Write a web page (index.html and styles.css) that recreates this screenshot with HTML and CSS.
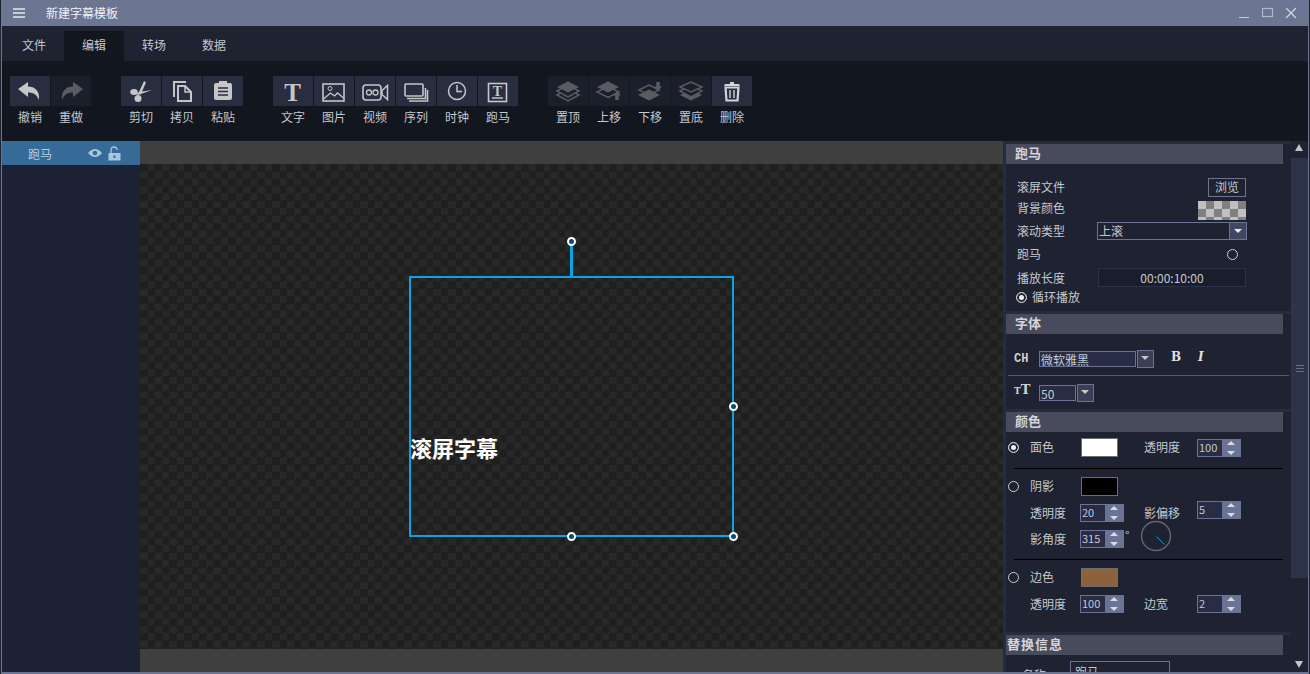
FILE: index.html
```html
<!DOCTYPE html>
<html lang="zh-CN">
<head>
    <meta charset="UTF-8">
    <title>新建字幕模板</title>
    <link rel="stylesheet" href="styles.css">
</head>
<body>
<div class="window">
    <div class="titlebar">
        <svg class="menu-icon" width="12" height="10" viewBox="0 0 12 10"><path d="M0 1h12M0 5h12M0 9h12" stroke="#c8ccd6" stroke-width="2"/></svg>
        <span class="title">新建字幕模板</span>
        <div class="win-controls">
            <svg width="12" height="12" viewBox="0 0 12 12"><path d="M0 10.500h10" stroke="#c8ccd6"/></svg>
            <svg width="12" height="12" viewBox="0 0 12 12"><rect x="0.500" y="1.500" width="10" height="8" fill="none" stroke="#b4b9c8" stroke-width="1.200"/></svg>
            <svg width="12" height="12" viewBox="0 0 12 12"><path d="M1 1l10 10M11 1L1 11" stroke="#d4d7df" stroke-width="1.200"/></svg>
        </div>
    </div>

    <div class="tabs">
        <div class="tab">文件</div>
        <div class="tab active">编辑</div>
        <div class="tab">转场</div>
        <div class="tab">数据</div>
    </div>

    <div class="toolbar">
        <div class="tool-group">
            <div class="tool">
                <div class="tool-btn"><svg width="40" height="30" viewBox="0 0 40 30"><path d="M8 13L18 6v4.500c7 0 12 4.500 11 13.500-2-5-5-7.500-11-7.500V21z" fill="#c6c6c6"/></svg></div>
                <span>撤销</span>
            </div>
            <div class="tool off">
                <div class="tool-btn"><svg width="40" height="30" viewBox="0 0 40 30"><path d="M32 13L22 6v4.500c-7 0-12 4.500-11 13.500 2-5 5-7.500 11-7.500V21z" fill="#5a5c63"/></svg></div>
                <span>重做</span>
            </div>
        </div>
        <div class="tool-group">
            <div class="tool">
                <div class="tool-btn"><svg width="40" height="30" viewBox="0 0 40 30"><path d="M23 5l-5 11 1.500 3L25 6.500zM31 14l-13 2-3 2 2 1z" fill="#c6c6c6"/><ellipse cx="13" cy="16" rx="3.800" ry="3" fill="#c6c6c6"/><ellipse cx="17" cy="22.500" rx="3.500" ry="3.500" fill="#c6c6c6"/></svg></div>
                <span>剪切</span>
            </div>
            <div class="tool">
                <div class="tool-btn"><svg width="40" height="30" viewBox="0 0 40 30"><path d="M24 6H12v15" fill="none" stroke="#c6c6c6" stroke-width="2"/><path d="M16 10h7l6 6v9H16z" fill="none" stroke="#c6c6c6" stroke-width="2"/><path d="M23 10v6h6" fill="none" stroke="#c6c6c6" stroke-width="1.500"/></svg></div>
                <span>拷贝</span>
            </div>
            <div class="tool">
                <div class="tool-btn"><svg width="40" height="30" viewBox="0 0 40 30"><path d="M11 9q0-2 2-2h3V5h8v2h3q2 0 2 2v13q0 2-2 2H13q-2 0-2-2z" fill="#c6c6c6"/><path d="M15 12h10M15 15.500h10M15 19h10" stroke="#282d40" stroke-width="1.500"/></svg></div>
                <span>粘贴</span>
            </div>
        </div>
        <div class="tool-group">
            <div class="tool">
                <div class="tool-btn"><svg width="40" height="30" viewBox="0 0 40 30"><text x="19.500" y="25" text-anchor="middle" class="icon-t">T</text></svg></div>
                <span>文字</span>
            </div>
            <div class="tool">
                <div class="tool-btn"><svg width="40" height="30" viewBox="0 0 40 30"><rect x="9" y="8" width="21" height="17" fill="none" stroke="#c6c6c6" stroke-width="1.600"/><circle cx="16" cy="12.500" r="2" fill="none" stroke="#c6c6c6"/><path d="M9.500 23l7-6 4 3 3-3 6 5" fill="none" stroke="#c6c6c6" stroke-width="1.300"/></svg></div>
                <span>图片</span>
            </div>
            <div class="tool">
                <div class="tool-btn"><svg width="40" height="30" viewBox="0 0 40 30"><rect x="8" y="9" width="18" height="15" rx="3" fill="none" stroke="#c6c6c6" stroke-width="1.600"/><circle cx="14" cy="16.500" r="2.500" fill="none" stroke="#c6c6c6" stroke-width="1.300"/><circle cx="20.500" cy="16.500" r="2.500" fill="none" stroke="#c6c6c6" stroke-width="1.300"/><path d="M32.500 9.500v14L27 18.500v-4z" fill="none" stroke="#c6c6c6" stroke-width="1.500"/></svg></div>
                <span>视频</span>
            </div>
            <div class="tool">
                <div class="tool-btn"><svg width="40" height="30" viewBox="0 0 40 30"><rect x="9" y="8" width="18" height="12" rx="1" fill="none" stroke="#c6c6c6" stroke-width="1.600"/><path d="M11 22.500h18.500V12" fill="none" stroke="#c6c6c6" stroke-width="1.600"/><path d="M13 25h18.500V14" fill="none" stroke="#c6c6c6" stroke-width="1.600"/></svg></div>
                <span>序列</span>
            </div>
            <div class="tool">
                <div class="tool-btn"><svg width="40" height="30" viewBox="0 0 40 30"><circle cx="20" cy="15" r="8.500" fill="none" stroke="#c6c6c6" stroke-width="1.500"/><path d="M20 9v6.500h5" fill="none" stroke="#c6c6c6" stroke-width="1.500"/></svg></div>
                <span>时钟</span>
            </div>
            <div class="tool">
                <div class="tool-btn"><svg width="40" height="30" viewBox="0 0 40 30"><rect x="10.500" y="7.500" width="18" height="18" fill="none" stroke="#c6c6c6" stroke-width="1.600"/><text x="19.500" y="20" text-anchor="middle" class="icon-t-small">T</text><path d="M14 22h11" stroke="#c6c6c6" stroke-width="1.500"/></svg></div>
                <span>跑马</span>
            </div>
        </div>
        <div class="tool-group">
            <div class="tool off">
                <div class="tool-btn"><svg width="40" height="30" viewBox="0 0 40 30"><path d="M9 19l11-6 11 6-11 6z" fill="none" stroke="#5a5b63" stroke-width="1.500"/><path d="M9 15l11-6 11 6-11 6z" fill="#1b1f2c" stroke="#5a5b63" stroke-width="1.500"/><path d="M9 11l11-5.500L31 11l-11 5.500z" fill="#5a5b63"/></svg></div>
                <span>置顶</span>
            </div>
            <div class="tool off">
                <div class="tool-btn"><svg width="40" height="30" viewBox="0 0 40 30"><path d="M8 16l11-5.500L30 16l-11 5.500z" fill="none" stroke="#5a5b63" stroke-width="1.500"/><path d="M8 11l11-5.500L30 11l-11 5.500z" fill="#5a5b63"/><path d="M28 15l4 4.500h-2.200V24h-3.600v-4.500H24z" fill="#5a5b63"/></svg></div>
                <span>上移</span>
            </div>
            <div class="tool off">
                <div class="tool-btn"><svg width="40" height="30" viewBox="0 0 40 30"><path d="M9 14l10-5 10 5-10 5z" fill="none" stroke="#5a5b63" stroke-width="1.500"/><path d="M8 19l11-5.500L30 19l-11 5.500z" fill="#5a5b63"/><path d="M28 15l-4-4.500h2.200V6h3.600v4.500H32z" fill="#5a5b63"/></svg></div>
                <span>下移</span>
            </div>
            <div class="tool off">
                <div class="tool-btn"><svg width="40" height="30" viewBox="0 0 40 30"><path d="M9 19l11-5.500L31 19l-11 5.500z" fill="#5a5b63"/><path d="M9 15l11-6 11 6-11 6z" fill="#1b1f2c" stroke="#5a5b63" stroke-width="1.500"/><path d="M9 11l11-5 11 5-11 5z" fill="#1b1f2c" stroke="#5a5b63" stroke-width="1.500"/></svg></div>
                <span>置底</span>
            </div>
            <div class="tool">
                <div class="tool-btn"><svg width="40" height="30" viewBox="0 0 40 30"><path d="M12 10l1-2h5V6h4v2h5l1 2z" fill="#d4d4d4"/><path d="M13.500 11.500h13l-1 13h-11z" fill="none" stroke="#d4d4d4" stroke-width="2.200"/><path d="M18 14v8M22 14v8" stroke="#d4d4d4" stroke-width="1.400"/></svg></div>
                <span>删除</span>
            </div>
        </div>
    </div>

    <div class="workspace">
        <div class="layers">
            <div class="layer-row">
                <span class="layer-name">跑马</span>
                <svg class="eye" width="16" height="10" viewBox="0 0 16 10"><path d="M1 5q7-8 14 0q-7 8-14 0z" fill="#a9c6dc"/><circle cx="8" cy="5" r="2.300" fill="#366a97"/></svg>
                <svg class="lock" width="13" height="15" viewBox="0 0 13 15"><path d="M3 7V4q0-3 3-3t3 3" fill="none" stroke="#a9c6dc" stroke-width="1.300"/><rect x="0.500" y="7" width="12" height="7.500" fill="#a9c6dc"/><rect x="5.500" y="9.500" width="2" height="2.500" fill="#366a97"/></svg>
            </div>
        </div>

        <div class="stage">
            <div class="band"></div>
            <div class="checker">
                <div class="selection">
                    <div class="stem"></div>
                    <div class="handle h-rot"></div>
                    <div class="handle h-right"></div>
                    <div class="handle h-bottom"></div>
                    <div class="handle h-corner"></div>
                    <div class="sub-text">滚屏字幕</div>
                </div>
            </div>
            <div class="band"></div>
        </div>

        <div class="props">
            <section class="sec">
                <h3 class="sec-head">跑马</h3>
                <div class="sec-main">
                    <div class="main-row h20"><span class="lbl">滚屏文件</span><span class="browse">浏览</span></div>
                    <div class="main-row h23"><span class="lbl">背景颜色</span><span class="alpha-swatch"></span></div>
                    <div class="main-row h21"><span class="lbl">滚动类型</span>
                        <div class="combo combo-wide"><span class="combo-text">上滚</span><span class="combo-arrow"></span></div>
                    </div>
                    <div class="main-row h26"><span class="lbl">跑马</span><span class="radio radio-end"></span></div>
                    <div class="main-row h21"><span class="lbl">播放长度</span><span class="time-box">00:00:10:00</span></div>
                    <div class="loop-row"><span class="radio checked"></span><span class="lbl">循环播放</span></div>
                </div>
            </section>

            <section class="sec">
                <h3 class="sec-head">字体</h3>
                <div class="font-row">
                    <span class="glyph-ch">CH</span>
                    <div class="combo combo-font"><span class="combo-text boxed">微软雅黑</span><span class="combo-arrow dark"></span></div>
                    <span class="style-b">B</span>
                    <span class="style-i">I</span>
                </div>
                <div class="font-line"></div>
                <div class="size-row">
                    <span class="glyph-tt"><small>T</small>T</span>
                    <div class="combo combo-size"><span class="combo-text boxed">50</span><span class="combo-arrow dark"></span></div>
                </div>
            </section>

            <section class="sec sec-color">
                <h3 class="sec-head">颜色</h3>
                <div class="color-row r-face">
                    <span class="radio checked"></span><span class="lbl">面色</span>
                    <span class="swatch white"></span><span class="lbl">透明度</span>
                    <div class="spin"><span class="spin-val">100</span><span class="spin-btn"></span></div>
                </div>
                <div class="black-line"></div>
                <div class="color-row r-swatch">
                    <span class="radio"></span><span class="lbl">阴影</span>
                    <span class="swatch black"></span>
                </div>
                <div class="color-row r-spin">
                    <span></span><span class="lbl">透明度</span>
                    <div class="spin"><span class="spin-val">20</span><span class="spin-btn"></span></div>
                    <span class="lbl">影偏移</span>
                    <div class="spin spin-up"><span class="spin-val">5</span><span class="spin-btn"></span></div>
                </div>
                <div class="color-row r-spin">
                    <span></span><span class="lbl">影角度</span>
                    <div class="spin"><span class="spin-val">315</span><span class="spin-btn"></span><span class="degree">°</span></div>
                    <svg class="dial" width="32" height="32" viewBox="0 0 32 32"><circle cx="16" cy="16" r="14.500" fill="none" stroke="#62656f" stroke-width="1.500"/><path d="M16.500 16.500l8 8" stroke="#1a9ad6"/></svg>
                </div>
                <div class="black-line second"></div>
                <div class="color-row r-swatch">
                    <span class="radio"></span><span class="lbl">边色</span>
                    <span class="swatch brown"></span>
                </div>
                <div class="color-row r-spin">
                    <span></span><span class="lbl">透明度</span>
                    <div class="spin"><span class="spin-val">100</span><span class="spin-btn"></span></div>
                    <span class="lbl">边宽</span>
                    <div class="spin"><span class="spin-val">2</span><span class="spin-btn"></span></div>
                </div>
            </section>

            <section class="sec sec-last">
                <h3 class="sec-head spaced">替换信息</h3>
                <div class="name-row"><span class="lbl">名称</span><span class="name-box">跑马</span></div>
            </section>
        </div>

        <div class="scrollbar">
            <div class="scroll-up"></div>
            <div class="scroll-thumb"><span class="grip"></span></div>
            <div class="scroll-track"></div>
            <div class="scroll-down"></div>
        </div>
    </div>
</div>
</body>
</html>
```

FILE: styles.css
```css
* {
    box-sizing: border-box;
}
html, body {
    margin: 0;
    height: 100%;
    overflow: hidden;
}
body {
    background: #1e2231;
    padding: 0 1px;
    font-family: "Noto Sans CJK SC", "Liberation Sans", sans-serif;
    font-size: 12px;
    color: #c4c8d0;
}
.window {
    height: 674px;
    display: flex;
    flex-direction: column;
    border: 1px solid #6b7491;
    border-top: none;
    border-bottom-width: 2px;
}

/* title */
.titlebar {
    height: 26px;
    flex: none;
    background: #6c7592;
    display: flex;
    align-items: center;
    padding-left: 12px;
    margin: 0 -1px;
}
.menu-icon {
    margin-right: 21px;
}
.title {
    color: #f0f1f4;
    line-height: 24px;
}
.win-controls {
    margin-left: auto;
    margin-right: 12px;
    display: flex;
    gap: 11px;
}

/* tabs */
.tabs {
    height: 35px;
    flex: none;
    background: #1e2231;
    display: flex;
    align-items: flex-end;
    padding-left: 2px;
}
.tab {
    width: 60px;
    height: 30px;
    line-height: 28px;
    text-align: center;
}
.tab.active {
    background: #12161f;
}

/* toolbar */
.toolbar {
    height: 80px;
    flex: none;
    background: #12161f;
    display: flex;
    gap: 30px;
    padding: 15px 0 0 8px;
}
.tool-group {
    display: flex;
    gap: 1px;
}
.tool {
    width: 40px;
    text-align: center;
}
.tool span {
    display: block;
    margin-top: 2px;
    line-height: 18px;
}
.tool-btn {
    height: 30px;
    background: #282d40;
}
.tool-btn svg {
    display: block;
}
.tool.off .tool-btn {
    background: #1b1f2c;
}
.icon-t {
    font-family: "Liberation Serif", serif;
    font-weight: bold;
    font-size: 25px;
    fill: #c6c6c6;
}
.icon-t-small {
    font-family: "Liberation Serif", serif;
    font-weight: bold;
    font-size: 14px;
    fill: #c6c6c6;
}

/* main area */
.workspace {
    flex: 1;
    display: flex;
    min-height: 0;
}
.layers {
    width: 138px;
    flex: none;
    background: #1c2133;
}
.layer-row {
    height: 24px;
    background: #366a97;
    display: flex;
    align-items: center;
    color: #b6cfe2;
    padding-left: 26px;
}
.layer-name {
    width: 59px;
}
.eye {
    margin-right: 5px;
}
.stage {
    width: 863px;
    flex: none;
    display: flex;
    flex-direction: column;
}
.band {
    height: 23px;
    flex: none;
    background: #3f3f3f;
}
.checker {
    flex: 1;
    position: relative;
    background-color: #1f1f1f;
    background-image: conic-gradient(#282828 25%, #1f1f1f 0 50%, #282828 0 75%, #1f1f1f 0);
    background-size: 14.67px 14.67px;
}
.selection {
    position: absolute;
    left: 269px;
    top: 112px;
    width: 325px;
    height: 261px;
    border: 2px solid #0aa3e6;
}
.stem {
    position: absolute;
    left: 159px;
    top: -33px;
    width: 3px;
    height: 32px;
    background: #0aa3e6;
}
.handle {
    position: absolute;
    width: 9px;
    height: 9px;
    border-radius: 50%;
    border: 2.500px solid #fff;
    background: #0c4d6d;
}
.h-rot {
    left: 156px;
    top: -41px;
}
.h-right {
    left: 318px;
    top: 124px;
}
.h-bottom {
    left: 156px;
    top: 254px;
}
.h-corner {
    left: 318px;
    top: 254px;
}
.sub-text {
    position: absolute;
    left: -1px;
    top: 153px;
    font-size: 22px;
    font-weight: bold;
    line-height: 32px;
    color: #fff;
    white-space: nowrap;
}

/* properties */
.props {
    width: 288px;
    flex: none;
    overflow: hidden;
    background: #1e2231;
    border-left: 3px solid #262b3e;
}
.sec {
    border-top: 3px solid #262b3e;
    padding-right: 8px;
}
.sec:first-child {
    height: 170px;
}
.sec-head {
    margin: 0;
    height: 20px;
    line-height: 17px;
    padding-left: 9px;
    background: #484b5c;
    color: #d4d5da;
    font-size: 13px;
    font-weight: bold;
}
.sec-head.spaced {
    padding-left: 1px;
    letter-spacing: 1px;
}
.sec-main {
    padding: 13px 37px 0 11px;
}
.main-row {
    display: flex;
    align-items: center;
    justify-content: space-between;
}
.h20 { height: 20px; }
.h21 { height: 21px; }
.h23 { height: 23px; }
.h26 { height: 26px; }
.lbl {
    line-height: 17px;
    margin-bottom: 2px;
    white-space: nowrap;
}
.h21 .lbl {
    margin-bottom: 0;
}
.browse {
    width: 38px;
    height: 19px;
    line-height: 16px;
    text-align: center;
    border: 1px solid #6a7394;
}
.alpha-swatch {
    width: 48px;
    height: 19px;
    margin-top: 3px;
    background-color: #c0c0c0;
    background-image: conic-gradient(#808080 25%, #c0c0c0 0 50%, #808080 0 75%, #c0c0c0 0);
    background-size: 16px 16px;
}
.combo {
    display: flex;
}
.combo-wide {
    width: 150px;
    height: 18px;
    margin-right: -1px;
    border: 1px solid #6a7394;
}
.combo-text {
    flex: 1;
    line-height: 15px;
    padding-left: 1px;
}
.combo-arrow {
    width: 17px;
    background: #414760;
    border-left: 1px solid #6a7394;
    position: relative;
}
.combo-arrow::after {
    content: "";
    position: absolute;
    left: 4px;
    top: 6px;
    border: 4px solid transparent;
    border-top: 4px solid #e8e8e8;
    border-bottom: none;
}
.combo-font {
    width: 115px;
    height: 18px;
}
.combo-size {
    width: 55px;
    height: 18px;
}
.combo-text.boxed {
    margin: 1px 1px 1px 0;
    height: 16px;
    border: 1px solid #6a7394;
    background: #282d45;
    line-height: 16px;
    padding-left: 1px;
    overflow: hidden;
}
.combo-arrow.dark {
    width: 17px;
    flex: none;
    border: 1px solid #6a7394;
    background: #3a3f55;
}
.combo-arrow.dark::after {
    left: 3px;
    top: 5px;
    border-top-color: #c8c8c8;
}
.radio {
    width: 11px;
    height: 11px;
    flex: none;
    border-radius: 50%;
    border: 1px solid #d0d0d0;
}
.radio.checked {
    background: #eee;
    box-shadow: inset 0 0 0 2px #1e2231;
}
.radio-end {
    margin-right: 8px;
}
.time-box {
    width: 148px;
    height: 19px;
    line-height: 17px;
    text-align: center;
    background: #1a1e2c;
    border: 1px solid #2c3248;
}
.loop-row {
    display: flex;
    align-items: center;
    gap: 5px;
    height: 18px;
    margin-left: -1px;
}
.sec:nth-child(2) {
    height: 98px;
}
.font-row {
    display: flex;
    align-items: center;
    height: 18px;
    margin-top: 16px;
    padding-left: 8px;
}
.glyph-ch {
    width: 25px;
    font-family: "Liberation Mono", monospace;
    font-weight: bold;
    font-size: 12px;
    color: #d0d0d0;
}
.style-b {
    margin-left: 17px;
    margin-top: -4px;
    width: 27px;
    font-family: "DejaVu Serif", serif;
    font-weight: bold;
    font-size: 12px;
    color: #e0e0e0;
}
.style-i {
    margin-top: -4px;
    font-family: "DejaVu Serif", serif;
    font-weight: bold;
    font-style: italic;
    font-size: 12px;
    color: #e0e0e0;
}
.font-line {
    height: 1px;
    margin: 7px -6px 8px 2px;
    background: #5a5a5a;
}
.size-row {
    display: flex;
    align-items: center;
    height: 18px;
    padding-left: 8px;
}
.glyph-tt {
    width: 25px;
    margin-top: -6px;
    font-family: "DejaVu Serif", serif;
    font-weight: bold;
    font-size: 13px;
    line-height: 14px;
    color: #d0d0d0;
}
.glyph-tt small {
    font-size: 9px;
}
.sec-color {
    height: 223px;
}
.color-row {
    display: grid;
    grid-template-columns: 24px 50px 64px 53px auto;
    align-items: center;
    justify-items: start;
}
.color-row .radio {
    margin-left: 2px;
}
.r-face {
    grid-template-rows: 19px;
    margin-top: 6px;
}
.r-swatch {
    grid-template-rows: 19px;
}
.r-spin {
    grid-template-rows: 18px;
    margin-top: 8px;
}
.black-line {
    height: 1px;
    background: #000;
    margin: 11px 0 8px 8px;
}
.swatch {
    width: 37px;
    height: 19px;
    margin-left: 1px;
    border: 1px solid #6e6e6e;
}
.white {
    background: #fff;
}
.black {
    background: #000;
}
.brown {
    background: #8b623c;
}
.spin {
    position: relative;
    display: flex;
    width: 44px;
    height: 18px;
    border: 1px solid #6a7394;
}
.spin-up {
    top: -3px;
}
.spin-val {
    width: 24px;
    padding-left: 1px;
    font-size: 11px;
    line-height: 15px;
    background: #282d45;
}
.spin-btn {
    flex: 1;
    background: #6a7394;
    position: relative;
}
.spin-btn::before, .spin-btn::after {
    content: "";
    position: absolute;
    left: 5px;
    border: 4px solid transparent;
}
.spin-btn::before {
    top: 1px;
    border-top: none;
    border-bottom: 4px solid #d8dbe4;
}
.spin-btn::after {
    bottom: 1px;
    border-bottom: none;
    border-top: 4px solid #d8dbe4;
}
.degree {
    position: absolute;
    left: 44px;
    top: -3px;
    line-height: 14px;
}
.dial {
    grid-column: 4;
    margin-left: -4px;
    margin-top: -6px;
    overflow: visible;
}
.name-row {
    display: flex;
    padding: 6px 0 0 16px;
    gap: 24px;
}
.name-row .lbl {
    margin-top: 5px;
}
.name-box {
    width: 100px;
    height: 24px;
    padding-left: 4px;
    line-height: 20px;
    border: 1px solid #6a7394;
}

/* scrollbar */
.scrollbar {
    flex: 1;
    display: flex;
    flex-direction: column;
    background: #1e2231;
}
.scroll-up, .scroll-down {
    height: 17px;
    flex: none;
    position: relative;
}
.scroll-up::after, .scroll-down::after {
    content: "";
    position: absolute;
    left: 4px;
    border: 4px solid transparent;
}
.scroll-up::after {
    top: 3px;
    border-top: none;
    border-bottom: 7px solid #c4c4c4;
}
.scroll-down::after {
    bottom: 4px;
    border-bottom: none;
    border-top: 7px solid #c4c4c4;
}
.scroll-thumb {
    height: 420px;
    flex: none;
    background: #2d3349;
    display: flex;
    align-items: center;
    justify-content: center;
}
.grip {
    width: 8px;
    height: 7px;
    border-top: 1px solid #6a6e7e;
    border-bottom: 1px solid #6a6e7e;
    background: linear-gradient(#6a6e7e, #6a6e7e) center / 100% 1px no-repeat;
}
.scroll-track {
    flex: 1;
}
```
